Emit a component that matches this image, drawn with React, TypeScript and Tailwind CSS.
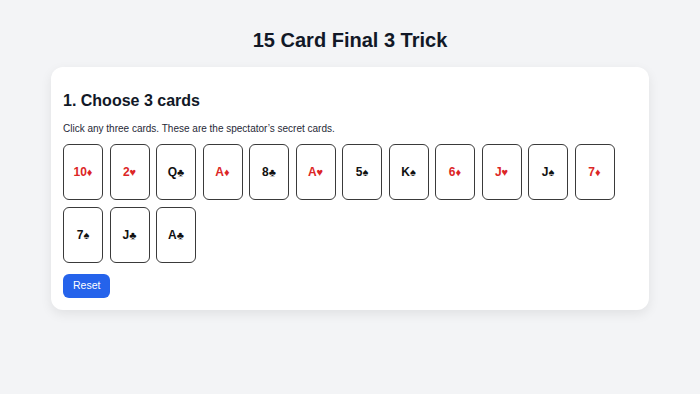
import { useState } from 'react';

type Card = { rank: string; suit: string };

const CARDS: Card[] = [
  { rank: '10', suit: '♦' },
  { rank: '2', suit: '♥' },
  { rank: 'Q', suit: '♣' },
  { rank: 'A', suit: '♦' },
  { rank: '8', suit: '♣' },
  { rank: 'A', suit: '♥' },
  { rank: '5', suit: '♠' },
  { rank: 'K', suit: '♠' },
  { rank: '6', suit: '♦' },
  { rank: 'J', suit: '♥' },
  { rank: 'J', suit: '♠' },
  { rank: '7', suit: '♦' },
  { rank: '7', suit: '♠' },
  { rank: 'J', suit: '♣' },
  { rank: 'A', suit: '♣' },
];

const isRed = (s: string) => s === '♦' || s === '♥';

export default function App() {
  const [picked, setPicked] = useState<number[]>([]);

  const toggle = (i: number) => {
    setPicked((p) => (p.includes(i) ? p.filter((x) => x !== i) : p.length < 3 ? [...p, i] : p));
  };

  return (
    <div className="min-h-screen bg-[#f3f4f6] text-[#111827] font-['Liberation_Sans',Arial,sans-serif] pt-[27px]">
      <h1 className="text-center text-[20px] font-bold leading-[26px] mb-[14px]">15 Card Final 3 Trick</h1>

      <div className="mx-[51px] bg-white rounded-[12px] shadow-[0_4px_12px_rgba(0,0,0,0.08)] px-[12px] pt-[24px] pb-[12px]">
        <h2 className="text-[16px] font-bold leading-[20px] mb-[11px]">1. Choose 3 cards</h2>
        <p className="text-[10px] leading-[14px] text-[#1f2937] mb-[8px]">
          Click any three cards. These are the spectator’s secret cards.
        </p>

        <div className="flex flex-wrap gap-x-[6.5px] gap-y-[7px] w-[560px]">
          {CARDS.map((c, i) => (
            <button
              key={i}
              onClick={() => toggle(i)}
              className={
                'w-[40px] h-[56px] rounded-[6px] border-[1.5px] border-[#3a3a3a] bg-white flex items-center justify-center text-[12px] font-bold ' +
                (isRed(c.suit) ? 'text-[#dc2626]' : 'text-[#111]') +
                (picked.includes(i) ? ' ring-2 ring-[#2563eb]' : '')
              }
            >
              {c.rank}
              <span className="text-[11px]">{c.suit}</span>
            </button>
          ))}
        </div>

        <button
          onClick={() => setPicked([])}
          className="mt-[11px] h-[24px] px-[10px] rounded-[6px] bg-[#2563eb] text-white text-[10.5px]"
        >
          Reset
        </button>
      </div>
    </div>
  );
}
